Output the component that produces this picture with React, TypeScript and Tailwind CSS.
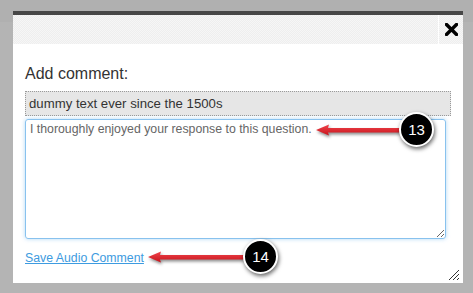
import React from 'react';

const Badge: React.FC<{ n: string }> = ({ n }) => (
    <div className="w-[35px] h-[35px] shrink-0 rounded-full bg-black border-2 border-white shadow-[1px_2px_4px_rgba(0,0,0,0.6)] flex items-center justify-center text-white text-[15px] leading-none">
        {n}
    </div>
);

const Arrow: React.FC<{ width: number }> = ({ width }) => (
    <svg width={width} height="16" viewBox={`0 0 ${width} 16`} className="overflow-visible -mr-[1px]">
        <defs>
            <linearGradient id={`ag${width}`} x1="0" y1="0" x2="0" y2="1">
                <stop offset="0" stopColor="#f0444c" />
                <stop offset="1" stopColor="#c8141c" />
            </linearGradient>
        </defs>
        <path
            d={`M0 8 L13 2.5 L12 6 L${width} 6 L${width} 10.5 L12 10.5 L13 13.5 Z`}
            fill={`url(#ag${width})`}
            style={{ filter: 'drop-shadow(1px 2px 1.5px rgba(0,0,0,0.45))' }}
        />
    </svg>
);

const Callout: React.FC<{ n: string; width: number; className: string }> = ({ n, width, className }) => (
    <div className={`absolute flex items-center ${className}`}>
        <Arrow width={width} />
        <Badge n={n} />
    </div>
);

export default function App() {
    return (
        <div className="relative w-[473px] h-[293px] overflow-hidden bg-[linear-gradient(#b0b0b0_0px,#b0b0b0_22px,#b4b4b4_22px)] pt-[11px] pl-[13px] font-['Liberation_Sans',Arial,sans-serif]">
            <div className="relative w-[450px] h-[272px] bg-white border-t-4 border-[#474747]">
                {/* header */}
                <div className="flex h-[29px] bg-[#f2f2f2] bg-[conic-gradient(#eeeeee_25%,#f6f6f6_0_50%,#eeeeee_0_75%,#f6f6f6_0)] bg-size-[2px_2px]">
                    <div className="flex-1" />
                    <div className="w-[25px] border-l border-white flex items-center justify-center">
                        <svg width="13" height="13" viewBox="0 0 13 13">
                            <path d="M1.5 1.5 L11.5 11.5 M11.5 1.5 L1.5 11.5" stroke="#000" strokeWidth="3.4" strokeLinecap="square" />
                        </svg>
                    </div>
                </div>

                <div className="flex flex-col items-start px-[12px] pt-[21px]">
                    <div className="text-[16px] leading-[18px] text-[#333]">Add comment:</div>
                    <div className="mt-[8px] w-full h-[25px] border border-dotted border-[#9a9a9a] bg-[#e6e6e6] px-[3px] flex items-center text-[13.2px] text-[#333]">
                        dummy text ever since the 1500s
                    </div>
                    <textarea
                        readOnly
                        defaultValue="I thoroughly enjoyed your response to this question."
                        className="mt-[3px] block w-[421px] h-[120px] rounded-[3px] border border-[#88c2ee] shadow-[0_0_4px_rgba(82,168,236,0.45)] px-[4px] py-[1px] text-[12.3px] leading-[16px] text-[#666] outline-none font-['Liberation_Sans',Arial,sans-serif]"
                    />
                    <a href="#" className="mt-[11px] text-[12.3px] leading-[16px] text-[#3d9be0] underline">
                        Save Audio Comment
                    </a>
                </div>

                {/* dialog resize grip */}
                <svg width="12" height="12" viewBox="0 0 12 12" className="absolute right-[3px] bottom-[2px]">
                    <path d="M1 11 L11 1 M5 11 L11 5 M9 11 L11 9" stroke="#333" strokeWidth="1" />
                </svg>
            </div>

            <Callout n="13" width={84} className="left-[316px] top-[112px]" />
            <Callout n="14" width={96} className="left-[148px] top-[239px]" />
        </div>
    );
}
